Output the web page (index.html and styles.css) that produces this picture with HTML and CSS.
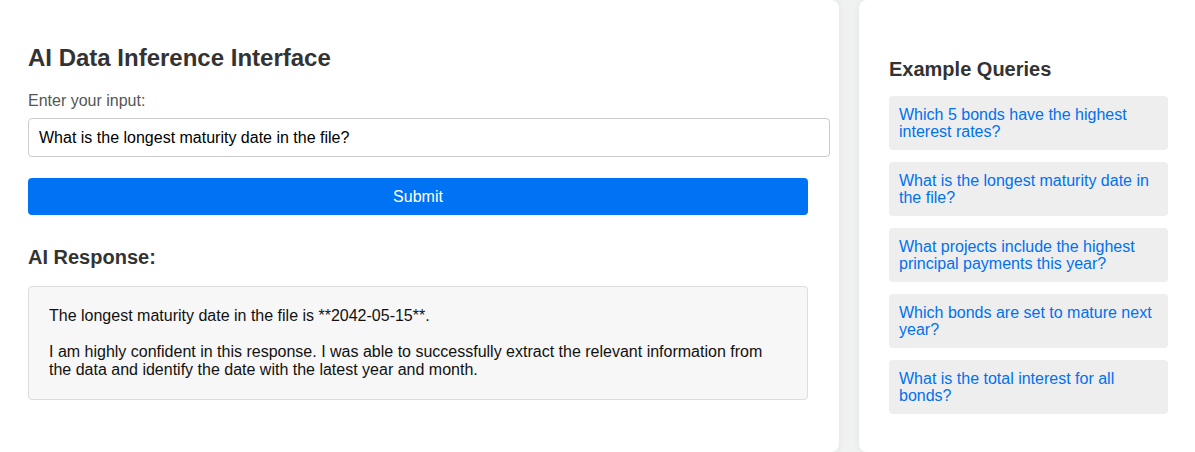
FILE: index.html
```html
<!DOCTYPE html>
<html>
<head>
<meta charset="utf-8">
<title>AI Data Inference Interface</title>
<link rel="stylesheet" href="styles.css">
</head>
<body>
<div class="layout">
  <main class="main-panel">
    <h1 class="title">AI Data Inference Interface</h1>
    <label class="label" for="q">Enter your input:</label>
    <input id="q" class="text-input" type="text" value="What is the longest maturity date in the file?">
    <button class="submit">Submit</button>
    <h2 class="section-title">AI Response:</h2>
    <div class="response">
      <p>The longest maturity date in the file is **2042-05-15**.</p>
      <p>I am highly confident in this response. I was able to successfully extract the relevant information from the data and identify the date with the latest year and month.</p>
    </div>
  </main>
  <aside class="side-panel">
    <h2 class="side-title">Example Queries</h2>
    <ul class="queries">
      <li class="query">Which 5 bonds have the highest interest rates?</li>
      <li class="query">What is the longest maturity date in the file?</li>
      <li class="query">What projects include the highest principal payments this year?</li>
      <li class="query">Which bonds are set to mature next year?</li>
      <li class="query">What is the total interest for all bonds?</li>
    </ul>
  </aside>
</div>
</body>
</html>
```
FILE: styles.css
```css
html, body {
  margin: 0;
  padding: 0;
  height: 100%;
}
body {
  background: #eff2f1;
  font-family: "Liberation Sans", Arial, sans-serif;
  color: #333;
  overflow: hidden;
}
.layout {
  display: flex;
  gap: 20px;
  height: 452px;
}
.main-panel {
  flex: 0 0 839px;
  box-sizing: border-box;
  background: #fff;
  border-radius: 0 8px 8px 0;
  padding: 44px 31px 0 28px;
  box-shadow: 0 0 8px rgba(0, 0, 0, 0.06);
}
.title {
  margin: 0 0 20px;
  font-size: 24px;
  font-weight: bold;
  color: #333;
  line-height: 28px;
}
.label {
  display: block;
  font-size: 16px;
  color: #555;
  line-height: 18px;
  margin-bottom: 8px;
}
.text-input {
  display: block;
  width: 100%;
  box-sizing: content-box;
  padding: 10px;
  margin: 0 0 21px;
  border: 1px solid #ccc;
  border-radius: 4px;
  font-family: "Liberation Sans", Arial, sans-serif;
  font-size: 16px;
  line-height: 17px;
  height: 17px;
  color: #000;
  background: #fff;
  outline: none;
}
.submit {
  display: block;
  width: 100%;
  height: 37px;
  border: none;
  border-radius: 4px;
  background: #0073f5;
  color: #fff;
  font-family: "Liberation Sans", Arial, sans-serif;
  font-size: 16px;
  cursor: pointer;
  margin-bottom: 30px;
}
.section-title {
  margin: 0 0 17px;
  font-size: 20px;
  font-weight: bold;
  line-height: 24px;
  color: #333;
}
.response {
  background: #f7f7f7;
  border: 1px solid #ddd;
  border-radius: 4px;
  padding: 20px;
  font-size: 16px;
  line-height: 18px;
  color: #111;
}
.response p {
  margin: 0 0 18px;
}
.response p:last-child {
  margin-bottom: 0;
}
.side-panel {
  flex: 1;
  background: #fff;
  border-radius: 8px 0 0 8px;
  padding: 57px 27px 0 30px;
  box-shadow: 0 0 8px rgba(0, 0, 0, 0.06);
}
.side-title {
  margin: 0 0 15px;
  font-size: 20px;
  font-weight: bold;
  line-height: 24px;
  color: #333;
}
.queries {
  list-style: none;
  margin: 0;
  padding: 0;
  display: flex;
  flex-direction: column;
  gap: 12px;
}
.query {
  background: #eee;
  border-radius: 4px;
  padding: 10px;
  font-size: 16px;
  line-height: 17px;
  color: #0071f0;
  cursor: pointer;
}
```
